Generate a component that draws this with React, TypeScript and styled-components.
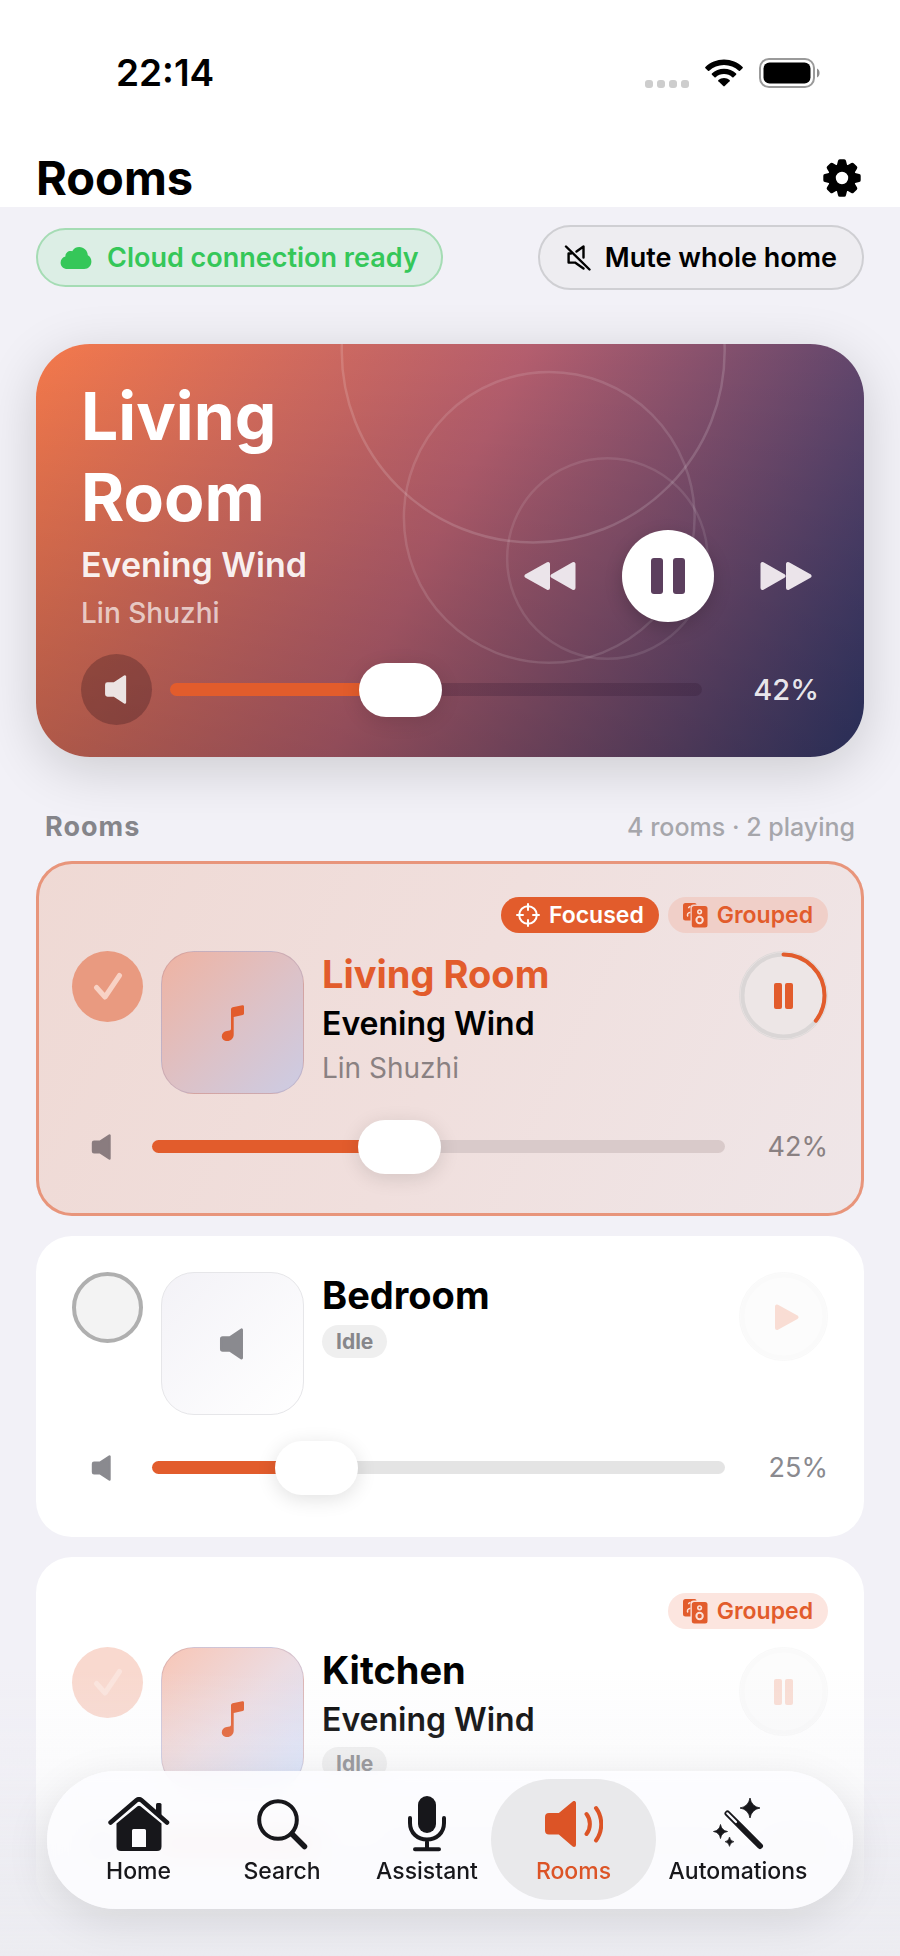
import React, { useState } from "react";
import styled, { createGlobalStyle, css } from "styled-components";

const accent = "#e25c2c";

const GlobalStyle = createGlobalStyle`
  *, *::before, *::after { box-sizing: border-box; }
  body {
    margin: 0;
    background: #f2f1f7;
    color: #000;
    font-family: Inter, "Liberation Sans", sans-serif;
    -webkit-font-smoothing: antialiased;
  }
  button { font: inherit; color: inherit; border: 0; padding: 0; background: none; cursor: pointer; }
  h1, h2, h3, p { margin: 0; }
  svg { display: block; flex: none; }
`;

/* ---------- icons ---------- */

const SpeakerIcon = ({ width = 23, height = 26 }: { width?: number; height?: number }) => (
  <svg width={width} height={height} viewBox="0 0 23 26" fill="currentColor" stroke="currentColor" strokeWidth="2.4" strokeLinejoin="round" aria-hidden="true">
    <path d="M3 7.800H9L18.500 1.400V24.600L9 18.200H3Q2 18.200 2 17.200V8.800Q2 7.800 3 7.800Z" />
  </svg>
);

const SpeakerSlashIcon = () => (
  <svg width="28" height="28" viewBox="0 0 28 28" fill="none" stroke="currentColor" strokeWidth="2.4" strokeLinejoin="round" strokeLinecap="round" aria-hidden="true">
    <path d="M12.500 7.500L19.500 2.500V13.500" />
    <path d="M19.500 24.500L11 18.600H4.600V9.500H7" />
    <path d="M2 2.500L25.500 25.500" />
  </svg>
);

const CloudIcon = () => (
  <svg width="32" height="24" viewBox="0 0 32 24" fill="currentColor" aria-hidden="true">
    <path d="M7.500 23C3.400 23 .6 20.200 .6 16.700C.6 13.600 2.600 11.200 5.400 10.500C5.200 6.800 8.800 4.200 12.200 5.300C13.600 2.500 16.200 1 19.300 1C24 1 27.600 4.600 27.800 9.300C30 10.400 31.400 12.600 31.400 15.500C31.400 19.800 28.400 23 24.200 23Z" />
  </svg>
);

const GearIcon = () => (
  <svg width="38" height="38" viewBox="0 0 38 38" aria-hidden="true">
    <g fill="currentColor">
      {[0, 45, 90, 135, 180, 225, 270, 315].map((angle) => (
        <path key={angle} transform={`rotate(${angle} 19 19)`} d="M13.200 9L15 1.800Q15.300 .3 16.800 .3H21.200Q22.700 .3 23 1.800L24.800 9Z" />
      ))}
      <path fillRule="evenodd" d="M19 5a14 14 0 1 0 0 28a14 14 0 1 0 0-28ZM19 12.800a6.200 6.200 0 1 1 0 12.400a6.200 6.200 0 1 1 0-12.400Z" />
    </g>
  </svg>
);

const WifiIcon = () => (
  <svg width="38" height="28" viewBox="0 0 38 28" fill="currentColor" aria-hidden="true">
    <path d="M19 .5C26.200 .5 32.800 3.300 37.600 8Q38.200 8.600 37.600 9.200L35 11.700Q34.400 12.200 33.800 11.700C29.900 8 24.700 5.900 19 5.900S8.100 8 4.200 11.700Q3.600 12.200 3 11.700L.4 9.200Q-.2 8.600 .4 8C5.200 3.300 11.800 .5 19 .5Z" />
    <path d="M19 9.800C23.700 9.800 27.900 11.600 31.100 14.600Q31.700 15.200 31.100 15.800L28.500 18.300Q27.900 18.800 27.300 18.300C25.100 16.300 22.200 15.100 19 15.100S12.900 16.300 10.700 18.300Q10.100 18.800 9.500 18.300L6.900 15.800Q6.300 15.200 6.900 14.600C10.100 11.600 14.300 9.800 19 9.800Z" />
    <path d="M19 18.900C21.100 18.900 23.100 19.700 24.600 21Q25.200 21.600 24.600 22.200L19.700 27.100Q19 27.700 18.300 27.100L13.400 22.200Q12.800 21.600 13.400 21C14.900 19.700 16.900 18.900 19 18.900Z" />
  </svg>
);

const BatteryIcon = () => (
  <svg width="62" height="30" viewBox="0 0 62 30" aria-hidden="true">
    <rect x="1" y="1" width="54" height="28" rx="9" fill="none" stroke="#9a9a9a" strokeWidth="2" />
    <rect x="4.500" y="4.500" width="47" height="21" rx="6" />
    <path d="M58 10.500C61.400 11.500 61.400 18.500 58 19.500Z" fill="#8e8e8e" />
  </svg>
);

const SignalDots = () => (
  <svg width="44" height="8" viewBox="0 0 44 8" fill="#cdcdcd" aria-hidden="true">
    {[0, 12, 24, 36].map((x) => <rect key={x} x={x} width="8" height="8" rx="3" />)}
  </svg>
);

const RewindIcon = () => (
  <svg width="52" height="30" viewBox="0 0 52 30" fill="currentColor" stroke="currentColor" strokeWidth="4" strokeLinejoin="round" aria-hidden="true">
    <path d="M2.500 15L24 3V27ZM28.500 15L49.500 3V27Z" />
  </svg>
);

const ForwardIcon = () => (
  <svg width="52" height="30" viewBox="0 0 52 30" fill="currentColor" stroke="currentColor" strokeWidth="4" strokeLinejoin="round" aria-hidden="true">
    <path d="M49.500 15L28 3V27ZM23.500 15L2.500 3V27Z" />
  </svg>
);

const HeroPauseIcon = () => (
  <svg width="34" height="36" viewBox="0 0 34 36" fill="currentColor" aria-hidden="true">
    <rect width="12" height="36" rx="3" />
    <rect x="22" width="12" height="36" rx="3" />
  </svg>
);

const CheckIcon = () => (
  <svg width="30" height="29" viewBox="0 0 30 29" fill="none" stroke="currentColor" strokeWidth="5" strokeLinecap="round" strokeLinejoin="round" aria-hidden="true">
    <path d="M3.500 15.500L12 25L26.500 3.500" />
  </svg>
);

const NoteIcon = () => (
  <svg width="24" height="36" viewBox="0 0 24 36" fill="currentColor" aria-hidden="true">
    <path d="M10 4.200Q10 2.600 11.600 2.200L21.300 .2Q23 -.1 23 1.500V8.500Q23 9.700 21.700 10L12.700 12V29.500C12.700 33.500 9.800 36 6.300 36C3 36 .8 34 .8 31.200C.8 28.300 3 26.500 5.800 26L8.600 25.500Q10 25.200 10 23.800Z" />
  </svg>
);

const TargetIcon = () => (
  <svg width="24" height="24" viewBox="0 0 24 24" fill="none" stroke="currentColor" strokeWidth="2" strokeLinecap="round" aria-hidden="true">
    <circle cx="12" cy="12" r="8.800" />
    <path d="M12 1V7M12 17V23M1 12H7M17 12H23" />
  </svg>
);

const GroupIcon = () => (
  <svg width="25" height="25" viewBox="0 0 25 25" aria-hidden="true">
    <path fill="currentColor" d="M2.500 0H11.500Q13.500 0 13.600 1.500H10.500Q7.500 1.500 7.500 4.500V17.500H2.500Q0 17.500 0 15V2.500Q0 0 2.500 0Z" />
    <path fill="none" stroke="#fbe0d8" strokeWidth="1.500" d="M7.500 3.500A1.800 1.800 0 0 0 5.600 5.300M7.500 9.500A2.500 2.500 0 0 0 5 13.500" />
    <rect x="8.800" y="3" width="15.700" height="21.500" rx="2.500" fill="currentColor" />
    <circle cx="16.600" cy="8.800" r="1.800" fill="none" stroke="#fbe0d8" strokeWidth="1.600" />
    <circle cx="16.600" cy="17" r="3.200" fill="none" stroke="#fbe0d8" strokeWidth="2" />
  </svg>
);

const HomeIcon = () => (
  <svg width="62" height="54" viewBox="0 0 62 54" aria-hidden="true">
    <path d="M48 7.500Q48 6 49.500 6H52Q53.500 6 53.500 7.500V21L48 16.500Z" fill="currentColor" />
    <path d="M2.600 25.500L28.500 3.300Q31 1.200 33.500 3.300L59 25.500" fill="none" stroke="currentColor" strokeWidth="4.600" strokeLinecap="round" />
    <path fillRule="evenodd" fill="currentColor" d="M8.500 26.500L29.500 9.300Q31 8.200 32.500 9.300L53.500 26.500V49.500Q53.500 54 49 54H13Q8.500 54 8.500 49.500ZM25.500 32Q24 32 24 33.500V50H38V33.500Q38 32 36.500 32Z" />
  </svg>
);

const SearchIcon = () => (
  <svg width="51" height="51" viewBox="0 0 51 51" fill="none" stroke="currentColor" strokeLinecap="round" aria-hidden="true">
    <circle cx="21" cy="21" r="18.800" strokeWidth="4" />
    <path d="M35 35L47.500 47.500" strokeWidth="5.500" />
  </svg>
);

const MicIcon = () => (
  <svg width="38" height="56" viewBox="0 0 38 56" aria-hidden="true">
    <rect x="10" y="0" width="18" height="37" rx="9" fill="currentColor" />
    <path d="M2 22V27C2 37 9.500 43.500 19 43.500S36 37 36 27V22M19 43.500V53M7 53.300H31" fill="none" stroke="currentColor" strokeWidth="4" strokeLinecap="round" />
  </svg>
);

const SpeakerWaveIcon = () => (
  <svg width="58" height="46" viewBox="0 0 58 46" aria-hidden="true">
    <path d="M4 14H14.500L29 2V44L14.500 31.500H4Q2 31.500 2 29.500V16Q2 14 4 14Z" fill="currentColor" stroke="currentColor" strokeWidth="4" strokeLinejoin="round" />
    <path d="M41.500 13C46 18.500 46 27.500 41.500 33M51 7C58 16.500 58 30 51 39.500" fill="none" stroke="currentColor" strokeWidth="4" strokeLinecap="round" />
  </svg>
);

const WandIcon = () => (
  <svg width="51" height="52" viewBox="0 0 51 52" fill="currentColor" aria-hidden="true">
    <path d="M14.500 15.500L47 48" stroke="currentColor" strokeWidth="6" strokeLinecap="round" />
    <path d="M14.300 15.300L23 24" stroke="#fbfbff" strokeWidth="2.200" strokeLinecap="round" />
    <path d="M37 0Q38.500 8.500 47 10Q38.500 11.500 37 20Q35.500 11.500 27 10Q35.500 8.500 37 0Z" stroke="currentColor" strokeWidth=".8" strokeLinejoin="round" />
    <path d="M7.500 26.500Q8.500 32.500 14.500 33.500Q8.500 34.500 7.500 40.500Q6.500 34.500 .5 33.500Q6.500 32.500 7.500 26.500Z" stroke="currentColor" strokeWidth=".8" strokeLinejoin="round" />
    <path d="M16.500 39Q17.200 43 21 43.700Q17.200 44.400 16.500 48.400Q15.800 44.400 12 43.700Q15.800 43 16.500 39Z" stroke="currentColor" strokeWidth=".6" strokeLinejoin="round" />
  </svg>
);

/* ---------- header ---------- */

const Screen = styled.div`
  display: flex;
  flex-direction: column;
  min-height: 100vh;
`;

const Header = styled.header`
  background: #fff;
`;

const StatusBar = styled.div`
  display: flex;
  align-items: center;
  justify-content: space-between;
  height: 146px;
  padding: 0 79px 0 116px;
  font-size: 37px;
  font-weight: 600;
  line-height: 44px;
`;

const StatusIcons = styled.div`
  display: flex;
  align-items: center;
  gap: 16px;

  & > svg:first-child { align-self: flex-end; }
`;

const TitleBar = styled.div`
  display: flex;
  align-items: center;
  justify-content: space-between;
  height: 61px;
  padding: 2px 36px 0;

  h1 { font-size: 47px; line-height: 58px; font-weight: 700; }
`;

const IconButton = styled.button`
  display: grid;
  place-items: center;
  width: 44px;
  height: 44px;
`;

/* ---------- page body ---------- */

const Content = styled.main`
  display: flex;
  flex-direction: column;
  padding: 18px 36px 40px;
`;

const ChipRow = styled.div`
  display: flex;
  align-items: center;
  justify-content: space-between;
  margin-bottom: 54px;
`;

const chip = css`
  display: flex;
  align-items: center;
  border-radius: 33px;
  font-size: 27px;
  line-height: 32px;
  font-weight: 600;
`;

const CloudChip = styled.div`
  ${chip}
  height: 59px;
  gap: 15px;
  padding: 0 22px;
  border: 2px solid #a5dcb4;
  background: #dceee5;
  color: #35c759;
`;

const MuteChip = styled.button`
  ${chip}
  height: 65px;
  gap: 13px;
  padding: 0 25px 0 24px;
  border: 2px solid #cfcfd3;
  background: #eeedf1;
`;

/* ---------- range slider ---------- */

const Range = styled.input<{ $track: string }>`
  appearance: none;
  flex: 1;
  min-width: 0;
  height: 54px;
  margin: 0;
  background: transparent;

  &::-webkit-slider-runnable-track {
    height: 13px;
    border-radius: 7px;
    background: linear-gradient(
      90deg,
      ${accent} calc(41px + (100% - 83px) * var(--level)),
      ${(p) => p.$track} calc(41px + (100% - 83px) * var(--level))
    );
  }

  &::-webkit-slider-thumb {
    appearance: none;
    width: 83px;
    height: 54px;
    margin-top: -20px;
    border-radius: 27px;
    background: #fff;
    box-shadow: 0 4px 20px rgba(0, 0, 0, 0.12);
  }
`;

function VolumeRange({ label, value, onChange, track }: {
  label: string; value: number; onChange: (v: number) => void; track: string;
}) {
  return (
    <Range
      type="range"
      min={0}
      max={100}
      value={value}
      aria-label={label}
      $track={track}
      style={{ "--level": value / 100 } as React.CSSProperties}
      onChange={(e) => onChange(Number(e.target.value))}
    />
  );
}

/* ---------- now playing card ---------- */

const Hero = styled.section`
  position: relative;
  display: flex;
  flex-direction: column;
  gap: 23px;
  padding: 32px 45px;
  overflow: hidden;
  border-radius: 54px;
  color: #fff;
  background:
    linear-gradient(180deg, rgba(0, 0, 0, 0) 0%, rgba(0, 0, 0, 0.2) 100%),
    linear-gradient(116deg, #f4794b 0%, #b45e6e 48%, #31386b 100%);
`;

const HeroShadow = styled.div`
  border-radius: 54px;
  box-shadow: 0 12px 54px rgba(0, 0, 0, 0.16);
`;

const HeroRings = styled.svg`
  position: absolute;
  inset: 0;
  width: 100%;
  height: 100%;
`;

const HeroTop = styled.div`
  position: relative;
  display: flex;
  align-items: flex-end;
  justify-content: space-between;
`;

const HeroInfo = styled.div`
  width: 300px;

  h2 { font-size: 66px; line-height: 81px; font-weight: 700; }
  p { font-size: 34px; line-height: 42px; font-weight: 600; margin-top: 6px; color: rgba(255, 255, 255, 0.92); }
  p + p { font-size: 28px; line-height: 35px; font-weight: 500; margin-top: 10px; color: rgba(255, 255, 255, 0.68); }
`;

const Transport = styled.div`
  display: flex;
  align-items: center;
  gap: 39px;
  margin-bottom: 9px;
  color: #ebe4ea;
`;

const SkipButton = styled.button`
  display: grid;
  place-items: center;
  width: 66px;
  height: 66px;
`;

const HeroPause = styled.button`
  display: grid;
  place-items: center;
  width: 92px;
  height: 92px;
  border-radius: 50%;
  background: #fff;
  color: #5c3f5e;
  box-shadow: 0 6px 18px rgba(0, 0, 0, 0.18);
`;

const HeroVolume = styled.div`
  position: relative;
  display: flex;
  align-items: center;
  gap: 18px;

  output { width: 99px; text-align: right; font-size: 29px; line-height: 34px; font-weight: 500; color: rgba(255, 255, 255, 0.9); }
`;

const HeroMute = styled.button`
  display: grid;
  place-items: center;
  width: 71px;
  height: 71px;
  border-radius: 50%;
  background: rgba(50, 20, 25, 0.3);
  color: #ece4e3;
`;

/* ---------- room list ---------- */

const SectionHead = styled.div`
  display: flex;
  align-items: center;
  justify-content: space-between;
  margin: 54px 9px 18px;
  line-height: 32px;

  h2 { font-size: 27px; font-weight: 700; letter-spacing: 1px; color: #85858a; }
  p { font-size: 25px; font-weight: 500; color: #a6a6ab; }
`;

const RoomList = styled.div`
  display: flex;
  flex-direction: column;
  gap: 20px;
`;

const Card = styled.article<{ $focused?: boolean }>`
  display: flex;
  flex-direction: column;
  gap: 18px;
  padding: 36px 36px 35px;
  border-radius: 36px;
  background: #fff;
  ${(p) => p.$focused && css`
    background: linear-gradient(115deg, #efd9d4 0%, #f0dfdd 50%, #efe6e8 100%);
    box-shadow: inset 0 0 0 3px #e8957b;
  `}
`;

const BadgeRow = styled.div`
  display: flex;
  justify-content: flex-end;
  gap: 9px;
`;

const Badge = styled.span<{ $solid?: boolean; $onTint?: boolean }>`
  display: flex;
  align-items: center;
  gap: 9px;
  height: 36px;
  padding: 0 15px;
  border-radius: 18px;
  font-size: 23px;
  line-height: 28px;
  font-weight: 600;
  color: ${(p) => (p.$solid ? "#fff" : accent)};
  background: ${(p) => (p.$solid ? accent : p.$onTint ? "#f0cfc8" : "#fce5df")};
`;

const RoomRow = styled.div`
  display: flex;
  align-items: flex-start;
  gap: 18px;
`;

const SelectBox = styled.label<{ $dim?: boolean }>`
  display: grid;
  place-items: center;
  flex: none;
  width: 71px;
  height: 71px;

  input, svg { grid-area: 1 / 1; }
  svg { color: ${(p) => (p.$dim ? "#fbe4dd" : "#f8d2c5")}; visibility: hidden; }
  input {
    appearance: none;
    width: 71px;
    height: 71px;
    margin: 0;
    border: 4px solid #afafaf;
    border-radius: 50%;
    background: #f3f3f3;
  }
  input:checked { border: 0; background: ${(p) => (p.$dim ? "#f9d9cf" : "#e99a80")}; }
  input:checked + svg { visibility: visible; }
`;

const Artwork = styled.div<{ $kind: "focused" | "idle" | "playing" }>`
  display: grid;
  place-items: center;
  flex: none;
  width: 143px;
  height: 143px;
  border-radius: 33px;
  color: ${(p) => (p.$kind === "idle" ? "#8a8a8f" : accent)};
  border: 1px solid ${(p) => (p.$kind === "idle" ? "#e6e6e9" : "rgba(130, 100, 130, 0.22)")};
  background: ${(p) => ({
    focused: "linear-gradient(135deg, #efb3a2 0%, #dcc2c8 55%, #cccce4 100%)",
    idle: "linear-gradient(135deg, #f3f2f7 0%, #ffffff 100%)",
    playing: "linear-gradient(135deg, #f8c6b6 0%, #ecdce2 50%, #d6e4ff 100%)",
  }[p.$kind])};
`;

const RoomText = styled.div`
  display: flex;
  flex-direction: column;
  align-items: flex-start;
  gap: 7px;
  flex: 1;
  min-width: 0;
`;

const RoomName = styled.h3<{ $focused?: boolean }>`
  font-size: 38px;
  line-height: 46px;
  font-weight: 700;
  color: ${(p) => (p.$focused ? accent : "#000")};
`;

const Track = styled.p`
  font-size: 32px;
  line-height: 40px;
  font-weight: 600;
`;

const Artist = styled.p`
  font-size: 28px;
  line-height: 34px;
  color: #8a8182;
`;

const IdleTag = styled.span`
  padding: 0 14px;
  border-radius: 17px;
  background: #efefef;
  color: #87878b;
  font-size: 21px;
  line-height: 33px;
  font-weight: 700;
`;

const PlayButton = styled.button<{ $dim?: boolean }>`
  flex: none;
  width: 89px;
  height: 89px;
  color: ${accent};
  opacity: ${(p) => (p.$dim ? 0.2 : 1)};
`;

const VolumeRow = styled.div<{ $focused?: boolean }>`
  display: flex;
  align-items: center;
  gap: 20px;
  height: 69px;

  output { width: 83px; text-align: right; font-size: 27px; line-height: 34px; color: ${(p) => (p.$focused ? "#8a8182" : "#8a8a8f")}; }
`;

const VolumeButton = styled.button<{ $focused?: boolean }>`
  display: grid;
  place-items: center;
  flex: none;
  width: 60px;
  height: 60px;
  color: ${(p) => (p.$focused ? "#8a7c7f" : "#8a8a8f")};
`;

function PlayRing({ playing, progress }: { playing: boolean; progress: number }) {
  const length = 2 * Math.PI * 41;
  const live = progress > 0;
  return (
    <svg width="89" height="89" viewBox="0 0 89 89" aria-hidden="true">
      <circle cx="44.500" cy="44.500" r="44" fill={live ? "#ede6e6" : "#f3f3f3"} stroke={live ? "#dfdada" : "#e2e2e2"} strokeWidth="1" />
      <circle cx="44.500" cy="44.500" r="41" fill="none" stroke={live ? "#dad6d6" : "#e8e8e8"} strokeWidth="4" />
      {live && (
        <circle
          cx="44.500" cy="44.500" r="41" fill="none" stroke="currentColor" strokeWidth="4" strokeLinecap="round"
          strokeDasharray={`${length * progress} ${length}`} transform="rotate(-90 44.500 44.500)"
        />
      )}
      {playing ? (
        <g fill="currentColor">
          <rect x="35" y="32" width="8" height="26" rx="2" />
          <rect x="46" y="32" width="8" height="26" rx="2" />
        </g>
      ) : (
        <path d="M38 34.500V56L57.500 45.300Z" fill="currentColor" stroke="currentColor" strokeWidth="4" strokeLinejoin="round" />
      )}
    </svg>
  );
}

type Room = {
  name: string; track?: string; artist?: string; idle?: boolean; focused?: boolean; grouped?: boolean;
  selected: boolean; volume: number; progress: number;
};

const rooms: Room[] = [
  { name: "Living Room", track: "Evening Wind", artist: "Lin Shuzhi", focused: true, grouped: true, selected: true, volume: 42, progress: 0.355 },
  { name: "Bedroom", idle: true, selected: false, volume: 25, progress: 0 },
  { name: "Kitchen", track: "Evening Wind", idle: true, grouped: true, selected: true, volume: 33, progress: 0 },
];

function RoomCard({ room }: { room: Room }) {
  const [volume, setVolume] = useState(room.volume);
  const [selected, setSelected] = useState(room.selected);
  const { focused, grouped, track } = room;
  const artwork = focused ? "focused" : track ? "playing" : "idle";
  return (
    <Card $focused={focused}>
      {(focused || grouped) && (
        <BadgeRow>
          {focused && <Badge $solid><TargetIcon />Focused</Badge>}
          {grouped && <Badge $onTint={focused}><GroupIcon />Grouped</Badge>}
        </BadgeRow>
      )}
      <RoomRow>
        <SelectBox $dim={!focused}>
          <input type="checkbox" aria-label={`Group ${room.name}`} checked={selected} onChange={(e) => setSelected(e.target.checked)} />
          <CheckIcon />
        </SelectBox>
        <Artwork $kind={artwork}>{track ? <NoteIcon /> : <SpeakerIcon width={28} height={32} />}</Artwork>
        <RoomText>
          <RoomName $focused={focused}>{room.name}</RoomName>
          {track && <Track>{track}</Track>}
          {room.artist && <Artist>{room.artist}</Artist>}
          {room.idle && <IdleTag>Idle</IdleTag>}
        </RoomText>
        <PlayButton $dim={!focused} aria-label={track ? "Pause" : "Play"}>
          <PlayRing playing={!!track} progress={room.progress} />
        </PlayButton>
      </RoomRow>
      <VolumeRow $focused={focused}>
        <VolumeButton $focused={focused} aria-label={`Mute ${room.name}`}><SpeakerIcon /></VolumeButton>
        <VolumeRange label={`${room.name} volume`} value={volume} onChange={setVolume} track={focused ? "#d9caca" : "#e4e4e4"} />
        <output>{volume}%</output>
      </VolumeRow>
    </Card>
  );
}

/* ---------- tab bar ---------- */

const BottomFade = styled.div`
  position: fixed;
  left: 0;
  right: 0;
  bottom: 0;
  height: 290px;
  pointer-events: none;
  background: linear-gradient(
    180deg,
    rgba(235, 235, 240, 0) 0%,
    rgba(235, 235, 240, 0.22) 35%,
    rgba(235, 235, 240, 0.8) 75%,
    rgba(236, 236, 241, 1) 100%
  );
`;

const TabBar = styled.nav`
  position: fixed;
  left: 47px;
  right: 47px;
  bottom: 47px;
  display: grid;
  grid-template-columns: 143fr 144fr 146fr 147fr 182fr;
  height: 138px;
  padding: 8px 24px 9px 20px;
  border-radius: 69px;
  background: rgba(253, 253, 255, 0.86);
  backdrop-filter: blur(14px);
  box-shadow: 0 12px 44px rgba(0, 0, 0, 0.1);
`;

const Tab = styled.a<{ $active?: boolean }>`
  display: flex;
  flex-direction: column;
  align-items: center;
  padding-top: 12px;
  border-radius: 61px;
  font-size: 23px;
  line-height: 28px;
  font-weight: 500;
  text-decoration: none;
  color: ${(p) => (p.$active ? "#dc5426" : "#17171b")};
  ${(p) => p.$active && css`
    margin: 0 -9px;
    background: #e9e9eb;
  `}
`;

const TabIcon = styled.span`
  display: grid;
  place-items: center;
  height: 66px;
`;

const tabs = [
  { label: "Home", icon: <HomeIcon /> },
  { label: "Search", icon: <SearchIcon /> },
  { label: "Assistant", icon: <MicIcon /> },
  { label: "Rooms", icon: <SpeakerWaveIcon />, active: true },
  { label: "Automations", icon: <WandIcon /> },
];

export default function App() {
  const [volume, setVolume] = useState(42);
  return (
    <Screen>
      <GlobalStyle />
      <Header>
        <StatusBar>
          <time>22:14</time>
          <StatusIcons><SignalDots /><WifiIcon /><BatteryIcon /></StatusIcons>
        </StatusBar>
        <TitleBar>
          <h1>Rooms</h1>
          <IconButton aria-label="Settings"><GearIcon /></IconButton>
        </TitleBar>
      </Header>
      <Content>
        <ChipRow>
          <CloudChip><CloudIcon />Cloud connection ready</CloudChip>
          <MuteChip><SpeakerSlashIcon />Mute whole home</MuteChip>
        </ChipRow>
        <HeroShadow>
          <Hero>
            <HeroRings viewBox="0 0 828 412" preserveAspectRatio="xMidYMid slice" fill="none" stroke="#fff" strokeWidth="2.500" aria-hidden="true">
              <circle cx="497" cy="7" r="191" strokeOpacity=".15" />
              <circle cx="513" cy="173" r="145" strokeOpacity=".12" />
              <circle cx="571" cy="214" r="100" strokeOpacity=".1" />
            </HeroRings>
            <HeroTop>
              <HeroInfo>
                <h2>Living Room</h2>
                <p>Evening Wind</p>
                <p>Lin Shuzhi</p>
              </HeroInfo>
              <Transport>
                <SkipButton aria-label="Previous"><RewindIcon /></SkipButton>
                <HeroPause aria-label="Pause"><HeroPauseIcon /></HeroPause>
                <SkipButton aria-label="Next"><ForwardIcon /></SkipButton>
              </Transport>
            </HeroTop>
            <HeroVolume>
              <HeroMute aria-label="Mute"><SpeakerIcon width={26} height={29} /></HeroMute>
              <VolumeRange label="Volume" value={volume} onChange={setVolume} track="rgba(40, 15, 40, 0.22)" />
              <output>{volume}%</output>
            </HeroVolume>
          </Hero>
        </HeroShadow>
        <SectionHead>
          <h2>Rooms</h2>
          <p>4 rooms · 2 playing</p>
        </SectionHead>
        <RoomList>
          {rooms.map((room) => <RoomCard key={room.name} room={room} />)}
        </RoomList>
      </Content>
      <BottomFade />
      <TabBar>
        {tabs.map((tab) => (
          <Tab key={tab.label} href="#" $active={tab.active} aria-current={tab.active ? "page" : undefined}>
            <TabIcon>{tab.icon}</TabIcon>
            {tab.label}
          </Tab>
        ))}
      </TabBar>
    </Screen>
  );
}
